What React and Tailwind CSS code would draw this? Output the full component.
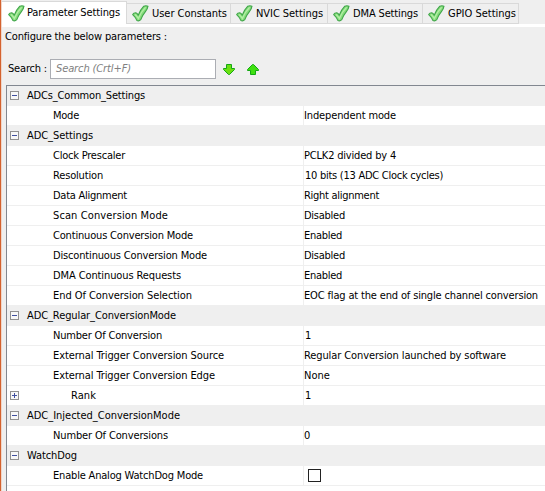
import { useLayoutEffect, useRef, useState } from "react";

// Text run whose tracking is adjusted so that it spans `w` pixels.
function Label({ w, children, className = "" }) {
  const ref = useRef(null);
  const [spacing, setSpacing] = useState(0);
  useLayoutEffect(() => {
    const natural = ref.current.getBoundingClientRect().width;
    setSpacing((w - natural) / children.length);
  }, []);
  return (
    <span ref={ref} className={`inline-block shrink-0 whitespace-pre ${className}`} style={{ letterSpacing: spacing }}>
      {children}
    </span>
  );
}

function Check() {
  return (
    <svg width="17" height="17" viewBox="0 0 17 17" className="shrink-0">
      <path
        d="M.7 9.6 Q1.6 7.8 3.8 7.8 Q5.4 8.4 6.2 10.2 Q8.6 4.4 11.8 1.2 Q14 .3 16 1.2 Q15.6 4 13.4 6.6 Q10.4 10.2 8.8 14.6 Q6.8 16.6 4.8 15.4 Q3.4 12 .7 9.6 Z"
        fill="#86dc7c"
        stroke="#3fa548"
        strokeWidth="1.1"
        strokeLinejoin="round"
      />
      <path d="M3 9.4 Q5 11 6.4 13.4 Q8.8 7.2 13.6 2.4" fill="none" stroke="#b4f0a6" strokeWidth="1.3" />
    </svg>
  );
}

function Arrow({ up }) {
  return (
    <svg width="12" height="11" viewBox="0 0 12 11" className={up ? "rotate-180" : ""}>
      <path d="M3.5 .5 H8.5 V4.5 H11.5 V5.5 L6.5 10.5 H5.5 L.5 5.5 V4.5 H3.5 Z" fill={up ? "#3fe010" : "#6be010"} stroke="#14a814" />
    </svg>
  );
}

function Toggle({ plus }) {
  return (
    <svg width="9" height="9" viewBox="0 0 9 9" className="mb-px shrink-0" shapeRendering="crispEdges">
      <rect x=".5" y=".5" width="8" height="8" fill="#f8f8f8" stroke="#919191" />
      <path d={plus ? "M2 4.5H7M4.5 2V7" : "M2 4.5H7"} stroke="#4050a0" />
    </svg>
  );
}

const tabs = [
  ["User Constants", 75, "w-[104px]"],
  ["NVIC Settings", 67, "w-[97px]"],
  ["DMA Settings", 65, "w-[95px]"],
  ["GPIO Settings", 68, "w-[96px]"],
];

const rows = [
  { group: "ADCs_Common_Settings", w: 118 },
  { name: "Mode", w: 26, value: "Independent mode", vw: 92 },
  { group: "ADC_Settings", w: 66 },
  { name: "Clock Prescaler", w: 72, value: "PCLK2 divided by 4", vw: 92 },
  { name: "Resolution", w: 50, value: "10 bits (13 ADC Clock cycles)", vw: 138 },
  { name: "Data Alignment", w: 74, value: "Right alignment", vw: 75 },
  { name: "Scan Conversion Mode", w: 115, value: "Disabled", vw: 41 },
  { name: "Continuous Conversion Mode", w: 140, value: "Enabled", vw: 38 },
  { name: "Discontinuous Conversion Mode", w: 154, value: "Disabled", vw: 41 },
  { name: "DMA Continuous Requests", w: 128, value: "Enabled", vw: 38 },
  { name: "End Of Conversion Selection", w: 139, value: "EOC flag at the end of single channel conversion", vw: 234 },
  { group: "ADC_Regular_ConversionMode", w: 149 },
  { name: "Number Of Conversion", w: 109, value: "1", vw: 7 },
  { name: "External Trigger Conversion Source", w: 171, value: "Regular Conversion launched by software", vw: 202 },
  { name: "External Trigger Conversion Edge", w: 162, value: "None", vw: 26 },
  { name: "Rank", w: 25, value: "1", vw: 7, nested: true },
  { group: "ADC_Injected_ConversionMode", w: 153 },
  { name: "Number Of Conversions", w: 115, value: "0", vw: 7 },
  { group: "WatchDog", w: 50 },
  { name: "Enable Analog WatchDog Mode", w: 150, checkbox: true },
];

function Row({ row }) {
  if (row.group)
    return (
      <div className="flex h-5 items-center bg-[#efefef] pl-[3px]">
        <Toggle />
        <Label w={row.w} className="ml-[8px]">{row.group}</Label>
      </div>
    );
  return (
    <div className="flex h-5 border-b border-[#efefef]">
      <div className="flex w-[297px] shrink-0 items-center border-r border-[#efefef] pl-[3px]">
        <span className="flex w-[43px] shrink-0">{row.nested && <Toggle plus />}</span>
        <Label w={row.w} className={row.nested ? "ml-[18px]" : ""}>{row.name}</Label>
      </div>
      <div className="flex items-center">
        {row.checkbox ? (
          <span className="ml-[4px] size-[13px] border border-[#222] bg-white" />
        ) : (
          <Label w={row.vw} className={row.value.startsWith("1") ? "ml-px" : ""}>{row.value}</Label>
        )}
      </div>
    </div>
  );
}

export default function App() {
  return (
    <div className="flex h-[491px] w-[545px] overflow-hidden bg-[#efefef] font-['DejaVu_Sans_Condensed','DejaVu_Sans',sans-serif] text-[11px] leading-[14px] text-black [font-stretch:condensed]">
      <div className="w-[2px] shrink-0 border-r border-[#f0d5c8] bg-[#d4622e]" />
      <div className="flex min-w-0 flex-1 flex-col">
        <div className="flex h-[27px] items-end border-b-[3px] border-white">
          <div className="mt-px flex h-[23px] w-[125px] items-center gap-[2px] self-start border-t border-r border-[#d9d9d9] bg-white pl-[6px] shadow-[0_3px_0_white]">
            <Check />
            <Label w={93}>Parameter Settings</Label>
          </div>
          {tabs.map(([name, w, width]) => (
            <div key={name} className={`flex h-[21px] items-center gap-[3px] border-y border-r border-[#d9d9d9] pl-[5px] ${width}`}>
              <Check />
              <Label w={w}>{name}</Label>
            </div>
          ))}
        </div>
        <div className="flex h-[19px] items-center pl-[3px]">
          <Label w={162}>Configure the below parameters :</Label>
        </div>
        <div className="mt-[13px] flex h-5 items-center pl-[6px]">
          <Label w={39}>Search :</Label>
          <div className="ml-[3px] flex h-5 w-[166px] items-center border border-[#abadb3] bg-white pl-[5px] text-[#808080] italic">
            <Label w={75}>Search (Crtl+F)</Label>
          </div>
          <div className="ml-[7px] flex gap-3">
            <Arrow />
            <Arrow up />
          </div>
        </div>
        <div className="mt-[6px] ml-[4px] flex-1 border-t border-l border-[#828790] bg-white">
          {rows.map((row, i) => (
            <Row key={i} row={row} />
          ))}
        </div>
      </div>
    </div>
  );
}
